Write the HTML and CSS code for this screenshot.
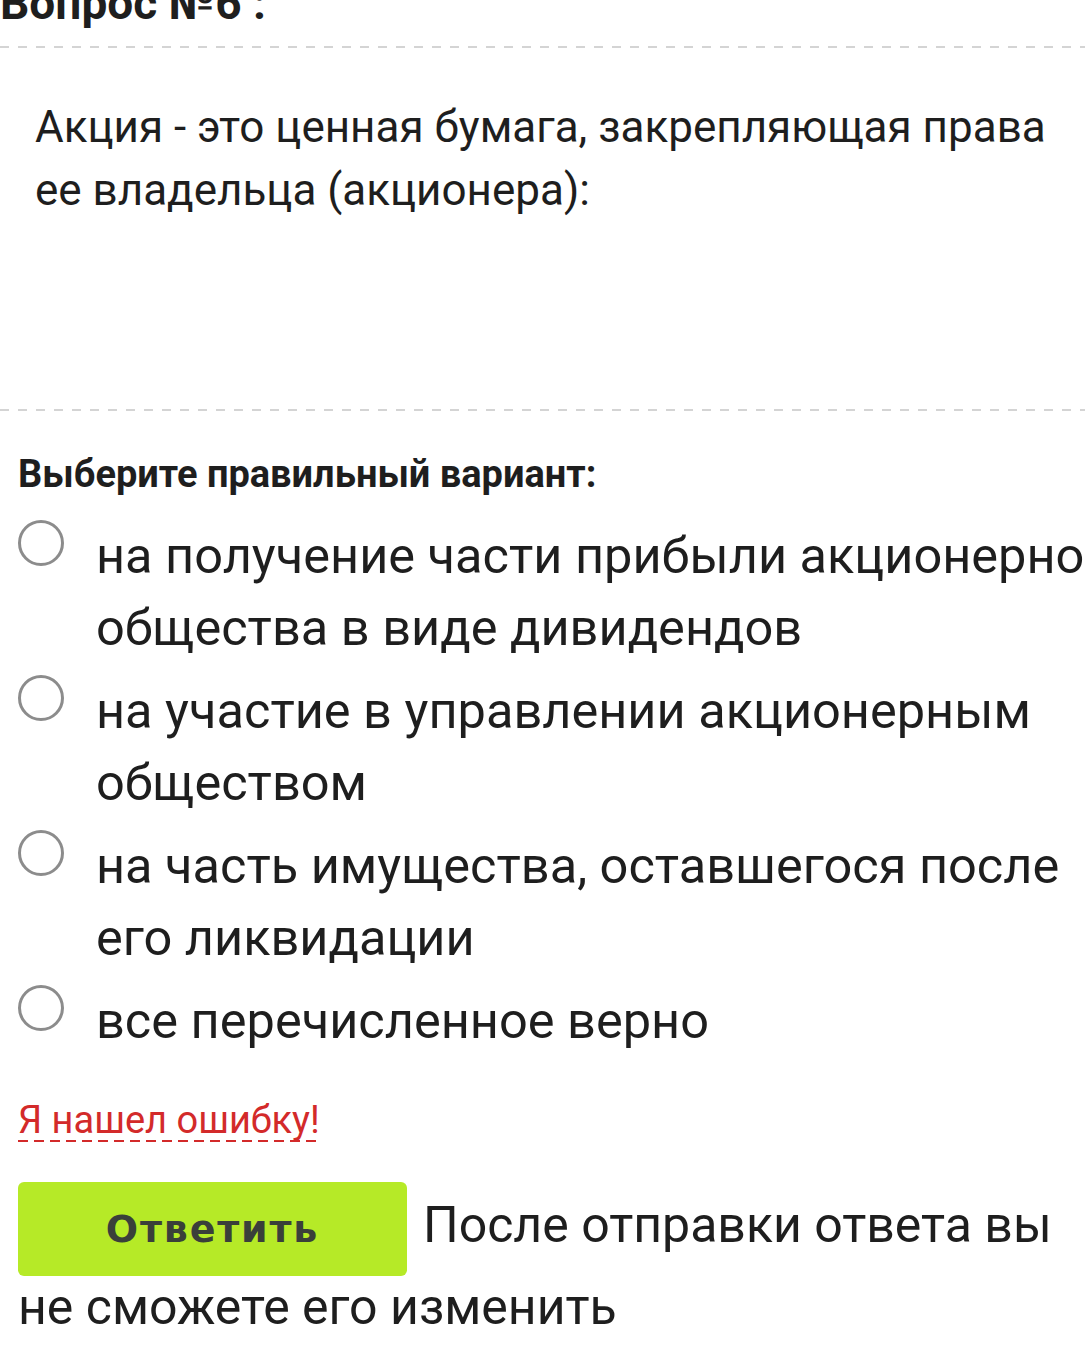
FILE: index.html
```html
<!DOCTYPE html>
<html lang="ru">
<head>
<meta charset="utf-8">
<title>Вопрос №6</title>
<link rel="stylesheet" href="styles.css">
</head>
<body>
<div class="page">
  <h2 class="title">Вопрос №6 :</h2>
  <div class="rule rule-top"></div>
  <div class="question">Акция - это ценная бумага, закрепляющая права ее владельца (акционера):</div>
  <div class="rule"></div>
  <div class="prompt">Выберите правильный вариант:</div>
  <ul class="options">
    <li class="option"><span class="radio"></span><span class="label">на получение части прибыли акционерного общества в виде дивидендов</span></li>
    <li class="option"><span class="radio"></span><span class="label">на участие в управлении акционерным обществом</span></li>
    <li class="option"><span class="radio"></span><span class="label">на часть имущества, оставшегося после его ликвидации</span></li>
    <li class="option"><span class="radio"></span><span class="label">все перечисленное верно</span></li>
  </ul>
  <div class="report-row"><a class="report">Я нашел ошибку!</a></div>
  <div class="submit"><button class="btn">Ответить</button>После отправки ответа вы не сможете его изменить</div>
</div>
</body>
</html>
```

FILE: styles.css
```css
html, body {
  margin: 0;
  padding: 0;
  background: #ffffff;
  overflow-x: hidden;
}

body {
  font-family: Roboto, "Noto Sans", "DejaVu Sans", sans-serif;
  color: #1e1e1e;
}

.page {
  width: 1085px;
}

.title {
  margin: -23px 0 0 0;
  font-size: 46px;
  line-height: 52px;
  font-weight: 700;
  color: #1e1e1e;
}

.rule {
  height: 2px;
  background-image: repeating-linear-gradient(to right, #d4d4d4 0 9px, transparent 9px 18px);
}

.rule-top {
  margin-top: 17px;
}

.question {
  padding: 48px 30px 187px 35px;
  font-size: 44px;
  line-height: 63px;
}

.prompt {
  margin-top: 42px;
  padding-left: 18px;
  font-size: 38px;
  line-height: 43px;
  font-weight: 700;
}

.options {
  list-style: none;
  margin: 24px 0 0 0;
  padding: 0 0 0 18px;
  display: flex;
  flex-direction: column;
  gap: 11px;
}

.option {
  display: flex;
  align-items: flex-start;
  gap: 32px;
}

.radio {
  flex: none;
  width: 46px;
  height: 46px;
  box-sizing: border-box;
  border: 3px solid #8c8c8c;
  border-radius: 50%;
}

.label {
  width: 1045px;
  flex: none;
  font-size: 50.5px;
  line-height: 72px;
}

.report-row {
  margin-top: 41px;
  padding-left: 18px;
}

.report {
  display: inline-block;
  font-size: 38px;
  line-height: 44px;
  color: #d32a2a;
  text-decoration: none;
  background-image: repeating-linear-gradient(to right, #d32a2a 0 10px, transparent 10px 16px);
  background-repeat: no-repeat;
  background-position: left bottom;
  background-size: 100% 2px;
}

.submit {
  margin-top: 40px;
  padding-left: 18px;
  font-size: 50px;
  line-height: 62px;
}

.btn {
  display: inline-flex;
  align-items: center;
  justify-content: center;
  width: 389px;
  height: 94px;
  margin-right: 16px;
  padding: 0;
  border: none;
  border-radius: 6px;
  background: #b6ea27;
  color: #3a3f3a;
  font-family: "DejaVu Sans", "Liberation Sans", sans-serif;
  font-size: 38px;
  font-weight: 700;
  letter-spacing: 1.8px;
  vertical-align: baseline;
}
```
